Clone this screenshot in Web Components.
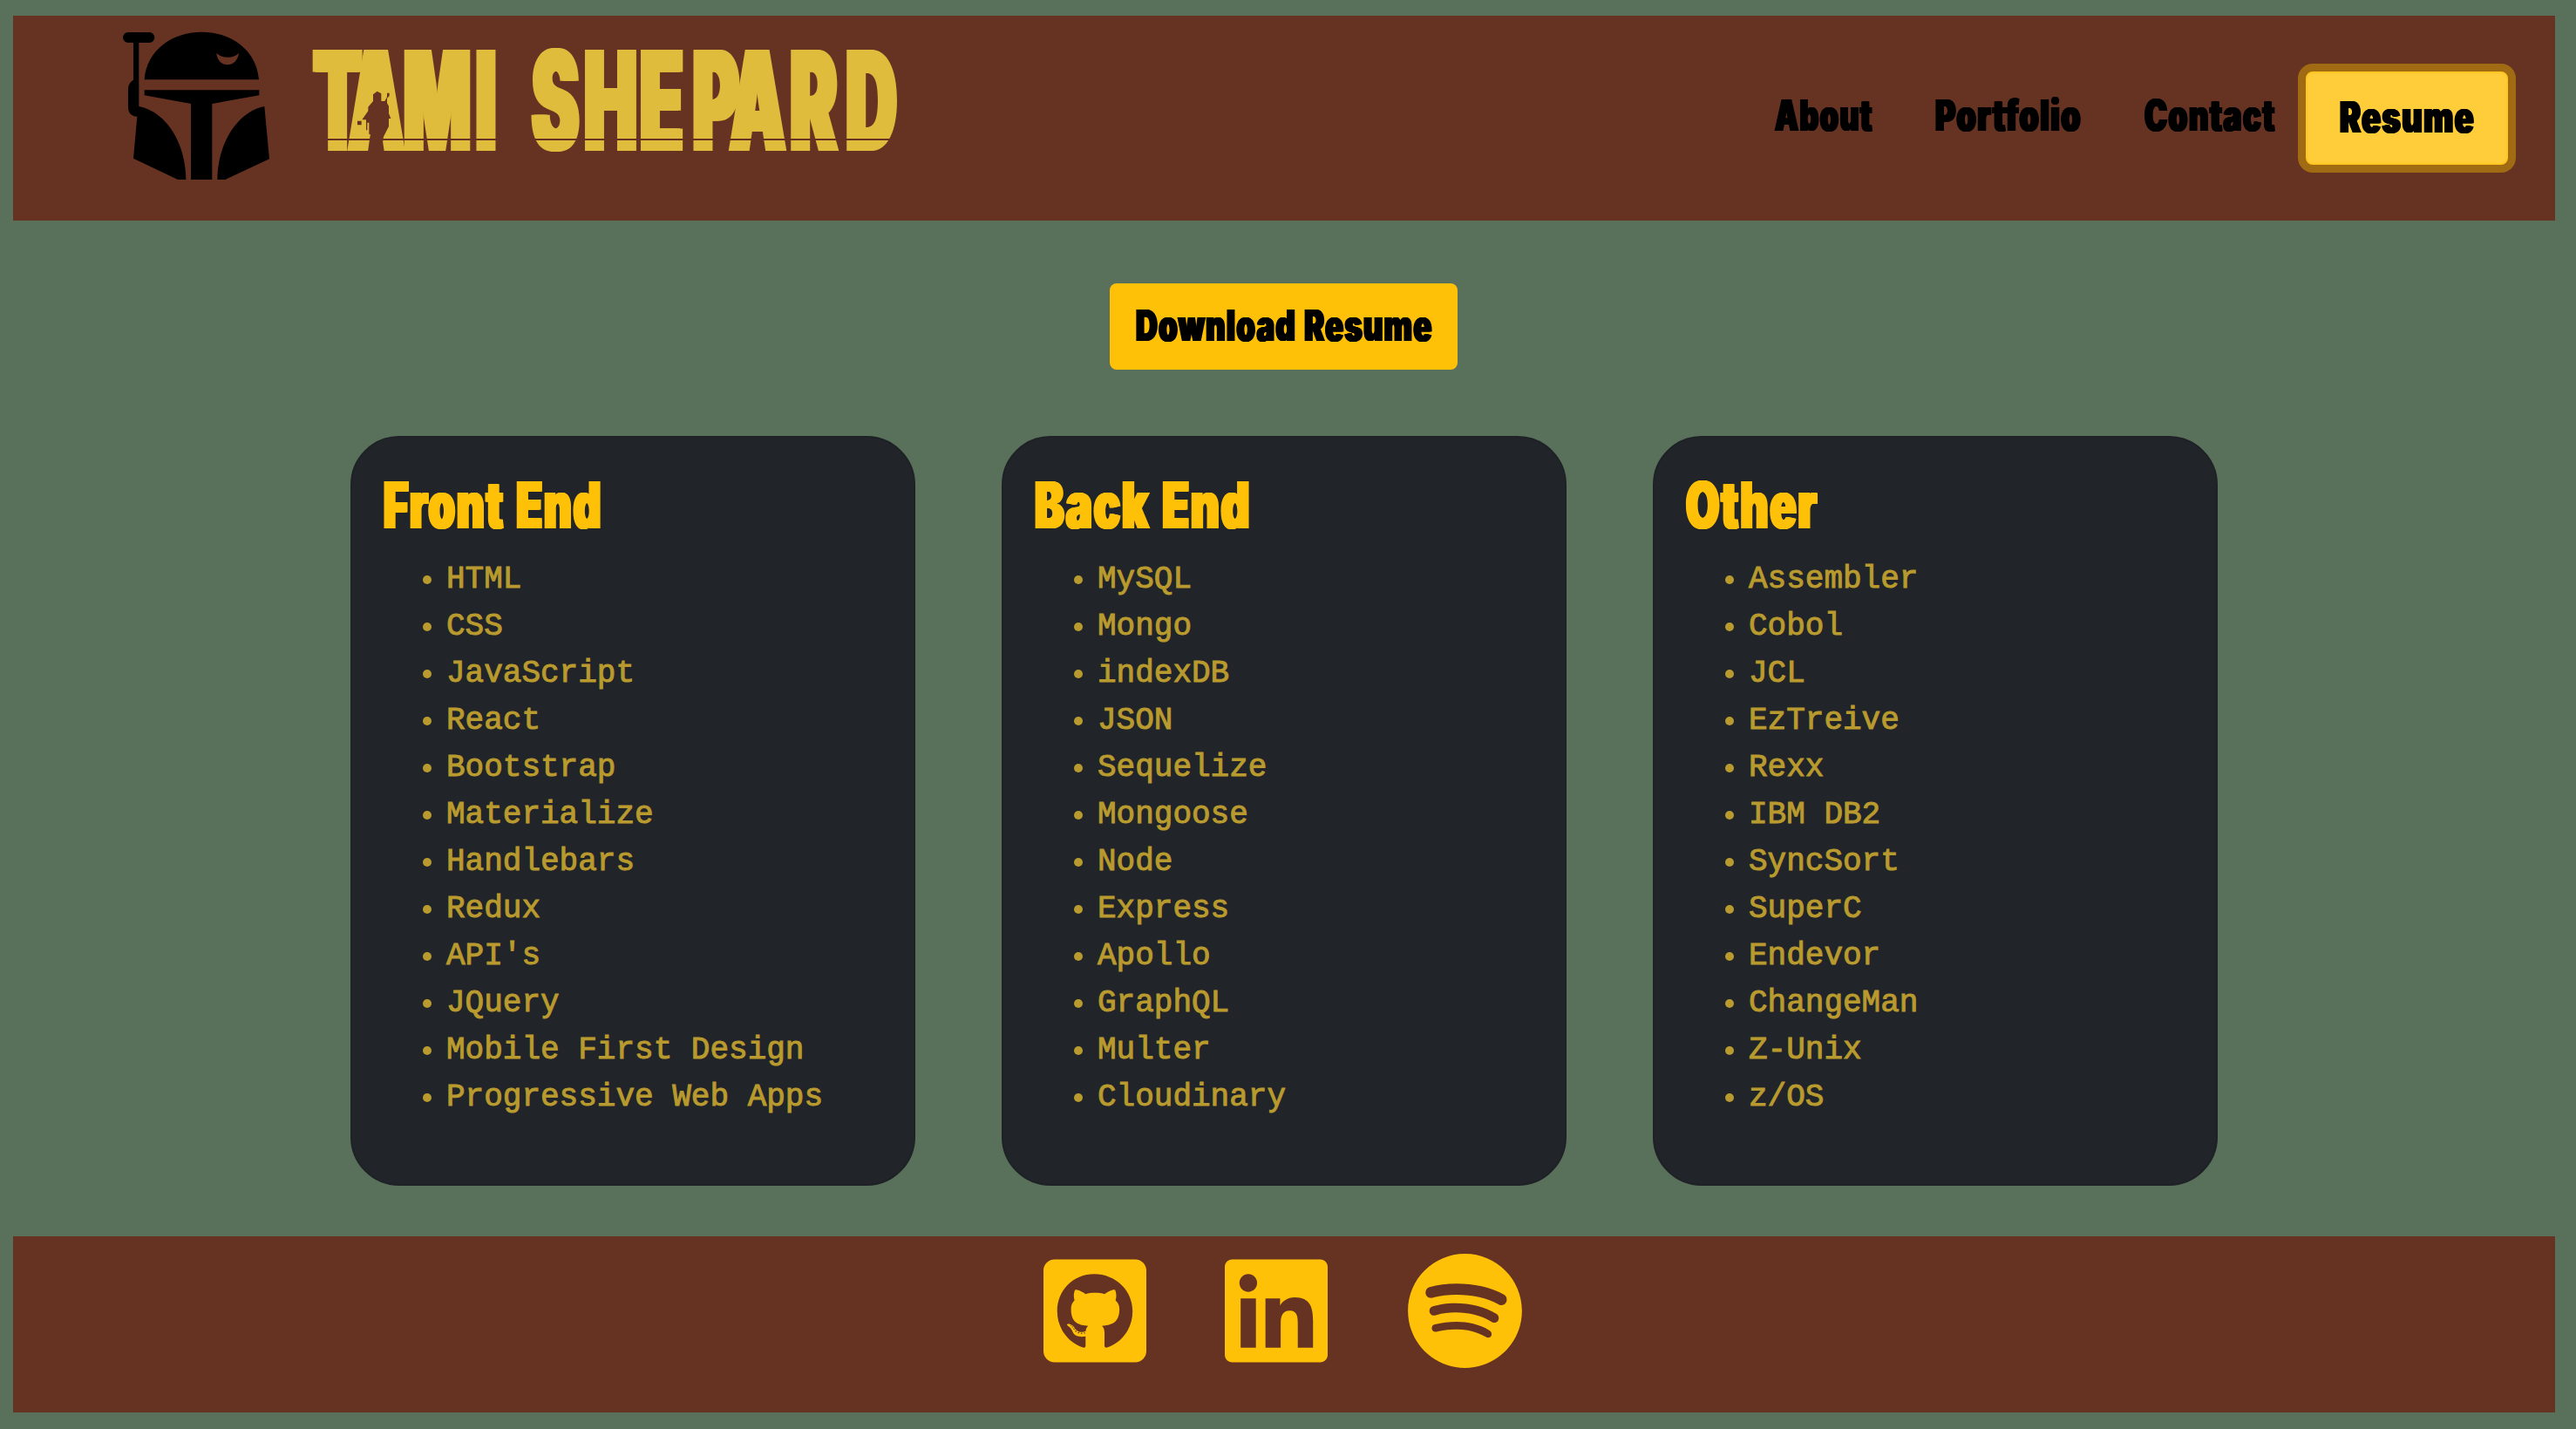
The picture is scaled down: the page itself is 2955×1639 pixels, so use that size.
<!DOCTYPE html>
<html lang="en">
<head>
<meta charset="utf-8">
<title>Tami Shepard</title>
<style>
html{background:#59705a}
body{margin:0;padding:18px 24px 19px 15px;height:1639px;box-sizing:border-box;display:flex;flex-direction:column;overflow:hidden;font-family:"Liberation Sans",sans-serif}
.cards{display:flex;gap:99px;margin:76px 0 58px 387px}
</style>
</head>
<body>
<site-header>
  <nav-link fit="112" style="margin-right:72px">About</nav-link>
  <nav-link fit="167" style="margin-right:73px">Portfolio</nav-link>
  <nav-link fit="150" style="margin-right:35px">Contact</nav-link>
  <nav-link fit="154" active>Resume</nav-link>
</site-header>
<download-button fit="340">Download Resume</download-button>
<main class="cards">
  <skill-card heading="Front End" fit="250" items="HTML|CSS|JavaScript|React|Bootstrap|Materialize|Handlebars|Redux|API's|JQuery|Mobile First Design|Progressive Web Apps"></skill-card>
  <skill-card heading="Back End" fit="247" items="MySQL|Mongo|indexDB|JSON|Sequelize|Mongoose|Node|Express|Apollo|GraphQL|Multer|Cloudinary"></skill-card>
  <skill-card heading="Other" fit="151" items="Assembler|Cobol|JCL|EzTreive|Rexx|IBM DB2|SyncSort|SuperC|Endevor|ChangeMan|Z-Unix|z/OS"></skill-card>
</main>
<site-footer></site-footer>
<script>
// Condensed poster lettering: squeezes its text to the width in "fit".
class PosterText extends HTMLElement{
  connectedCallback(){
    const r=this.attachShadow({mode:'open'});
    r.innerHTML=`<style>
      :host{display:block;height:1em;line-height:1em;width:${this.getAttribute('fit')}px;white-space:nowrap}
      span{display:inline-block;transform-origin:0 50%;font-family:Inter,"Noto Sans",sans-serif;font-weight:900;letter-spacing:.04em;word-spacing:.03em;text-shadow:.035em 0 currentColor,-.035em 0 currentColor,.018em 0 currentColor,-.018em 0 currentColor}
    </style><span><slot></slot></span>`;
    const s=r.querySelector('span');
    s.style.transform=`scaleX(${this.getAttribute('fit')/(s.offsetWidth-.02*parseFloat(getComputedStyle(s).fontSize))})`;
  }
}
class NavLink extends HTMLElement{
  connectedCallback(){
    const fit=this.getAttribute('fit');
    this.attachShadow({mode:'open'}).innerHTML=`<style>
      :host{display:block;color:#000;font-size:49.5px}
      a{display:block;color:inherit;text-decoration:none;padding-bottom:5px}
      :host([active]) a{box-sizing:border-box;width:232px;height:107px;padding:26px 0 0 37px;background:#ffcd39;border:2px solid #ffc720;border-radius:8px;box-shadow:0 0 0 9px #a16b14}
    </style><a><poster-text fit="${fit}"><slot></slot></poster-text></a>`;
  }
}
class BrandLogo extends HTMLElement{
  connectedCallback(){
    this.attachShadow({mode:'open'}).innerHTML=`<style>
      :host{display:flex;align-items:flex-start;gap:47px}
      svg{display:block;overflow:visible}
      text{filter:drop-shadow(6px 0 0 #e0bc3c) drop-shadow(-6px 0 0 #e0bc3c)}
    </style>
    <svg width="168" height="169" viewBox="423 111 504 507">
      <path d="M441 111H514A18 18 0 0 1 514 147H478V366C578 386 640 500 640 618H612L459 545L472 401C454 401 441 390 441 370V306Q441 286 459 275V147H441A18 18 0 0 1 441 111Z"/>
      <path fill-rule="evenodd" d="M497 274C504 175 590 110 694 110S884 175 891 274ZM745 183C750 236 815 236 822 183C805 202 765 202 745 183Z"/>
      <path d="M497 310H892V328L730 357V618H657V357L497 328Z"/>
      <path d="M910 366L927 547L775 618H748C748 500 812 386 910 366Z"/>
    </svg>
    <svg width="676" height="120" viewBox="356 57 676 120" style="margin-top:20px">
      <text y="173" transform="scale(.505 1)" font-family="Inter,Noto Sans,sans-serif" font-weight="900" font-size="159.5" fill="#e0bc3c">TAMI SHEPARD</text>
      <path fill="#663323" d="M350 159H1034V161H350Z"/>
      <path transform="translate(340 30) scale(.33333)" fill="#663323" d="M266 432H292L300 380L318 345V318H325L318 300V275L312 265V248L320 240V230H312V244L304 258H292V232L278 224L264 235V258L247 278V292L226 322H240V358H244V332H250V372H258V400Z M210 326H224V340H210Z"/>
    </svg>`;
    // Centre each letter in its slot.
    const t=this.shadowRoot.querySelector('text');
    const slot=[[356,411],[397,466],[466,537],[547,568],[580,600],[612,662],[671,730],[734,784],[788,847],[836,902],[903,964],[970,1029]];
    const k=.505;
    t.setAttribute('x',slot.map(([a,b],i)=>((a+b)/2/k-t.getExtentOfChar(i).width/2).toFixed(1)).join(' '));
  }
}
class SiteHeader extends HTMLElement{
  connectedCallback(){
    this.attachShadow({mode:'open'}).innerHTML=`<style>
      :host{display:flex;flex:none;justify-content:space-between;align-items:flex-start;height:235px;box-sizing:border-box;background:#663323;padding:19px 54px 0 126px}
      nav{display:flex;align-items:center;margin-top:45px;height:107px}
    </style><brand-logo></brand-logo><nav><slot></slot></nav>`;
  }
}
class DownloadButton extends HTMLElement{
  connectedCallback(){
    this.attachShadow({mode:'open'}).innerHTML=`<style>
      :host{display:block;flex:none;align-self:flex-start;box-sizing:border-box;width:399px;height:99px;margin:72px 0 0 1258px;padding:24px 0 0 30px;border-radius:8px;background:#ffc107;color:#000;font-size:49.5px}
    </style><poster-text fit="${this.getAttribute('fit')}"><slot></slot></poster-text>`;
  }
}
class SkillCard extends HTMLElement{
  connectedCallback(){
    this.attachShadow({mode:'open'}).innerHTML=`<style>
      :host{display:block;box-sizing:border-box;width:648px;height:860px;border:2px solid #1e2125;border-radius:56px;background:#212529;padding:40px 0 0 36px}
      h2{margin:0;font-size:74.3px;color:#ffc107;font-weight:400;height:96px}
      ul{margin:0;padding:0;list-style:none;font:36px/54px "Courier New","Liberation Mono",monospace;color:#b99a2e;-webkit-text-stroke:1px #b99a2e}
      li{display:flex;align-items:center;height:54px;padding-left:45px;white-space:pre}
      li::before{content:"";width:10px;height:10px;border-radius:50%;background:#b99a2e;margin-right:17px}
    </style><h2><poster-text fit="${this.getAttribute('fit')}">${this.getAttribute('heading')}</poster-text></h2>
    <ul>${this.getAttribute('items').split('|').map(i=>`<li>${i}</li>`).join('')}</ul>`;
  }
}
class SiteFooter extends HTMLElement{
  connectedCallback(){
    this.attachShadow({mode:'open'}).innerHTML=`<style>
      :host{display:flex;flex:none;align-items:flex-start;height:202px;box-sizing:border-box;background:#663323;padding:18px 0 0 1182px}
      svg{display:block;height:135px;fill:#ffc107}
    </style>
    <svg width="118" viewBox="0 0 448 512"><path d="M400 32H48C21.5 32 0 53.5 0 80v352c0 26.5 21.5 48 48 48h352c26.500 0 48-21.500 48-48V80c0-26.500-21.500-48-48-48zM277.300 415.700c-8.400 1.500-11.500-3.700-11.500-8 0-5.400.2-33 .2-55.300 0-15.600-5.200-25.500-11.300-30.700 37-4.100 76-9.200 76-73.100 0-18.200-6.500-27.300-17.100-39 1.700-4.300 7.400-22-1.700-45-13.900-4.300-45.700 17.900-45.700 17.900-13.200-3.700-27.500-5.600-41.600-5.600-14.100 0-28.400 1.900-41.600 5.600 0 0-31.800-22.200-45.700-17.900-9.100 22.900-3.500 40.600-1.700 45-10.600 11.700-15.600 20.800-15.600 39 0 63.600 37.300 69 74.300 73.100-4.800 4.300-9.100 11.700-10.600 22.300-9.500 4.300-33.800 11.700-48.300-13.900-9.100-15.800-25.500-17.100-25.500-17.100-16.200-.2-1.100 10.200-1.100 10.200 10.800 5 18.400 24.200 18.400 24.200 9.700 29.700 56.100 19.700 56.100 19.700 0 13.900.2 36.500.2 40.600 0 4.300-3 9.500-11.500 8-66-22.100-112.200-84.900-112.200-158.300 0-91.800 70.200-161.500 162-161.500S388 165.600 388 257.400c.1 73.400-44.700 136.300-110.700 158.300zm-98.100-61.100c-1.900.4-3.700-.4-3.900-1.700-.2-1.500 1.100-2.800 3-3.200 1.900-.2 3.700.6 3.900 1.900.3 1.300-1 2.600-3 3zm-9.500-.9c0 1.300-1.500 2.400-3.500 2.400-2.200.2-3.700-.9-3.700-2.400 0-1.300 1.500-2.400 3.500-2.400 1.900-.2 3.700.9 3.700 2.400zm-13.700-1.100c-.4 1.300-2.400 1.900-4.100 1.300-1.900-.4-3.200-1.900-2.800-3.200.4-1.300 2.400-1.900 4.100-1.500 2 .6 3.300 2.100 2.800 3.400zm-12.300-5.400c-.9 1.100-2.800.9-4.300-.6-1.500-1.300-1.900-3.200-.9-4.100.9-1.100 2.800-.9 4.300.6 1.300 1.300 1.800 3.300.9 4.100zm-9.100-9.100c-.9.6-2.600 0-3.700-1.500s-1.100-3.200 0-3.900c1.100-.9 2.800-.2 3.700 1.300 1.100 1.500 1.100 3.300 0 4.100zm-6.500-9.700c-.9.9-2.400.4-3.500-.6-1.100-1.300-1.300-2.800-.4-3.500.9-.9 2.400-.4 3.500.6 1.100 1.300 1.300 2.800.4 3.500zm-6.700-7.400c-.4.9-1.700 1.100-2.800.4-1.300-.6-1.900-1.700-1.500-2.600.4-.6 1.500-.9 2.800-.4 1.300.7 1.900 1.800 1.500 2.600z"/></svg>
    <svg width="118" style="margin-left:90px" viewBox="0 0 448 512"><path d="M416 32H31.900C14.300 32 0 46.500 0 64.300v383.400C0 465.500 14.300 480 31.900 480H416c17.600 0 32-14.500 32-32.300V64.300c0-17.800-14.400-32.300-32-32.300zM135.400 416H69V202.200h66.500V416zm-33.200-243c-21.300 0-38.500-17.300-38.500-38.500S80.900 96 102.200 96c21.200 0 38.500 17.300 38.500 38.500 0 21.300-17.200 38.500-38.500 38.500zm282.100 243h-66.400V312c0-24.800-.5-56.700-34.500-56.700-34.600 0-39.900 27-39.900 54.900V416h-66.400V202.200h63.700v29.200h.9c8.900-16.800 30.600-34.500 62.900-34.500 67.200 0 79.700 44.300 79.700 101.900V416z"/></svg>
    <svg width="131" style="margin-left:92px" viewBox="0 0 496 512"><path d="M248 8C111.100 8 0 119.100 0 256s111.100 248 248 248 248-111.100 248-248S384.900 8 248 8zm100.700 364.900c-4.200 0-6.800-1.300-10.700-3.600-62.400-37.600-135-39.200-206.700-24.500-3.900 1-9 2.600-11.900 2.600-9.700 0-15.800-7.700-15.800-15.800 0-10.300 6.100-15.200 13.600-16.800 81.900-18.100 165.600-16.500 237 26.200 6.100 3.900 9.700 7.400 9.700 16.500s-7.100 15.400-15.200 15.400zm26.900-65.600c-5.200 0-8.700-2.300-12.300-4.200-62.500-37-155.700-51.900-238.600-29.400-4.800 1.300-7.400 2.600-11.900 2.600-10.700 0-19.400-8.700-19.400-19.400s5.200-17.800 15.500-20.700c27.800-7.800 56.200-13.600 97.800-13.600 64.900 0 127.600 16.100 177 45.500 8.100 4.800 11.300 11 11.300 19.700-.1 10.800-8.500 19.500-19.400 19.500zm31-76.200c-5.200 0-8.400-1.300-12.900-3.900-71.200-42.500-198.500-52.700-280.900-29.700-3.600 1-8.100 2.600-12.900 2.600-13.200 0-23.300-10.300-23.300-23.600 0-13.600 8.400-21.300 17.400-23.900 35.200-10.300 74.600-15.200 117.500-15.200 73 0 149.500 15.200 205.400 47.800 7.800 4.500 12.900 10.700 12.900 22.600 0 13.600-11 23.300-23.200 23.300z"/></svg>`;
  }
}
customElements.define('poster-text',PosterText);
customElements.define('nav-link',NavLink);
customElements.define('brand-logo',BrandLogo);
customElements.define('site-header',SiteHeader);
customElements.define('download-button',DownloadButton);
customElements.define('skill-card',SkillCard);
customElements.define('site-footer',SiteFooter);
</script>
</body>
</html>
